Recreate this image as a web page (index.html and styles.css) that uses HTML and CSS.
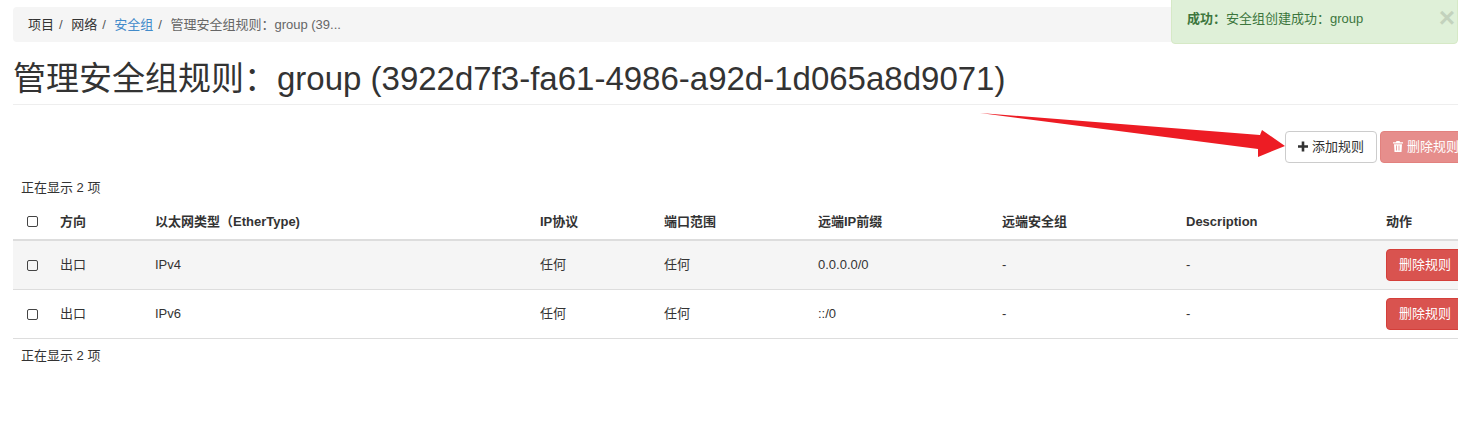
FILE: index.html
```html
<!DOCTYPE html>
<html lang="zh-CN">
<head>
    <meta charset="UTF-8">
    <title>管理安全组规则</title>
    <link rel="stylesheet" href="styles.css">
</head>
<body>
    <div class="alert">
        <span><b>成功：</b>安全组创建成功：group</span>
        <span class="alert-close">&times;</span>
    </div>
    <div class="page">
        <ol class="breadcrumb">
            <li>项目</li>
            <li>网络</li>
            <li><a href="#">安全组</a></li>
            <li class="current">管理安全组规则：group (39...</li>
        </ol>
        <h1 class="page-title">管理安全组规则：group (3922d7f3-fa61-4986-a92d-1d065a8d9071)</h1>
        <div class="actions">
            <button class="btn btn-default">
                <svg class="icon" viewBox="0 0 10 10"><path d="M3.7 0h2.6v3.7H10v2.6H6.3V10H3.7V6.3H0V3.7h3.7z"/></svg>添加规则
            </button>
            <button class="btn btn-danger btn-faded">
                <svg class="icon" viewBox="0 0 10 11"><path d="M3.5 0h3l.7 1.2H10v1.2H0V1.2h2.8zM1 3.2h8l-.5 7.8h-7zM3 4.5v5h.8v-5zm2.6 0v5h.8v-5z" fill-rule="evenodd"/></svg>删除规则
            </button>
        </div>
        <div class="count">正在显示 2 项</div>
        <table class="rules">
            <thead>
                <tr>
                    <th class="c-check"><span class="checkbox"></span></th>
                    <th class="c-dir">方向</th>
                    <th class="c-type">以太网类型（EtherType)</th>
                    <th class="c-proto">IP协议</th>
                    <th class="c-port">端口范围</th>
                    <th class="c-ip">远端IP前缀</th>
                    <th class="c-group">远端安全组</th>
                    <th class="c-desc">Description</th>
                    <th>动作</th>
                </tr>
            </thead>
            <tbody>
                <tr class="odd">
                    <td><span class="checkbox"></span></td>
                    <td>出口</td>
                    <td>IPv4</td>
                    <td>任何</td>
                    <td>任何</td>
                    <td>0.0.0.0/0</td>
                    <td>-</td>
                    <td>-</td>
                    <td><button class="btn btn-danger">删除规则</button></td>
                </tr>
                <tr>
                    <td><span class="checkbox"></span></td>
                    <td>出口</td>
                    <td>IPv6</td>
                    <td>任何</td>
                    <td>任何</td>
                    <td>::/0</td>
                    <td>-</td>
                    <td>-</td>
                    <td><button class="btn btn-danger">删除规则</button></td>
                </tr>
            </tbody>
        </table>
        <div class="count">正在显示 2 项</div>
    </div>
    <!-- annotation arrow over the page -->
    <svg class="arrow" viewBox="0 0 1458 432"><path d="M980 113 1260 135 1262 130 1285 146 1258 157 1258 149z" fill="#ed1c24"/></svg>
</body>
</html>
```

FILE: styles.css
```css
html, body {
    overflow: hidden;
}
body {
    margin: 0;
    width: 1458px;
    height: 432px;
    position: relative;
    font-family: "Liberation Sans", "Noto Sans CJK SC", sans-serif;
    font-size: 13px;
    line-height: 18px;
    color: #333;
    background-color: #fff;
}
.page {
    width: 1458px;
    height: 432px;
    box-sizing: border-box;
    overflow: hidden;
    padding: 7px 0 0 13px;
}
.breadcrumb {
    display: flex;
    margin: 0;
    padding: 8px 15px;
    width: 1432px;
    height: 35px;
    box-sizing: border-box;
    list-style: none;
    background-color: #f5f5f5;
    border-radius: 4px;
    line-height: 19px;
}
.breadcrumb li::after {
    content: "/";
    padding: 0 8.5px 0 5px;
    color: #555;
}
.breadcrumb li.current {
    color: #666;
}
.breadcrumb li.current::after {
    content: "";
}
.breadcrumb a {
    color: #428bca;
    text-decoration: none;
}
.page-title {
    margin: 16px 0 0;
    padding-bottom: 4px;
    height: 42px;
    border-bottom: 1px solid #eee;
    font-size: 33px;
    font-weight: 400;
    line-height: 42px;
    white-space: nowrap;
}
.actions {
    display: flex;
    gap: 3px;
    margin-top: 26px;
    height: 32px;
    padding-left: 1272px;
}
.btn {
    height: 32px;
    padding: 0 12px;
    border: 1px solid transparent;
    border-radius: 4px;
    font: inherit;
    white-space: nowrap;
}
.btn-default {
    color: #333;
    background-color: #fff;
    border-color: #ccc;
}
.btn-danger {
    color: #fff;
    background-color: #d9534f;
    border-color: #d43f3a;
}
.btn-faded {
    flex-shrink: 0;
    opacity: 0.65;
}
.icon {
    width: 10px;
    height: 11px;
    margin-right: 4px;
    vertical-align: -1px;
    fill: currentColor;
}
.count {
    padding-left: 8px;
    margin-top: 16px;
    height: 18px;
}
.rules {
    width: 1445px;
    margin-top: 7px;
    border-collapse: collapse;
    table-layout: fixed;
}
.rules th {
    height: 35px;
    padding: 0 8px;
    text-align: left;
    border-bottom: 2px solid #ddd;
}
.rules td {
    height: 48px;
    padding: 0 8px;
    border-bottom: 1px solid #ddd;
}
.rules .odd td {
    background-color: #f5f5f5;
}
.c-check { width: 23px; }
.c-dir { width: 79px; }
.c-type { width: 369px; }
.c-proto { width: 108px; }
.c-port { width: 138px; }
.c-ip { width: 168px; }
.c-group { width: 168px; }
.c-desc { width: 184px; }
.checkbox {
    display: block;
    width: 9px;
    height: 9px;
    border: 1px solid #444;
    border-radius: 2px;
    margin-left: 6px;
}
.rules + .count {
    margin-top: 8px;
}
.alert {
    position: absolute;
    top: -8px;
    right: 0;
    width: 287px;
    height: 52px;
    box-sizing: border-box;
    padding: 17px 0 0 15px;
    display: flex;
    justify-content: space-between;
    color: #3c763d;
    font-size: 13px;
    background-color: #dff0d8;
    border: 1px solid #d6e9c6;
    border-radius: 4px;
}
.alert-close {
    margin: -1px 2px 0 0;
    font-size: 28px;
    font-weight: 700;
    color: #000;
    opacity: 0.12;
}
.arrow {
    position: absolute;
    top: 0;
    left: 0;
    width: 1458px;
    height: 432px;
}
```
